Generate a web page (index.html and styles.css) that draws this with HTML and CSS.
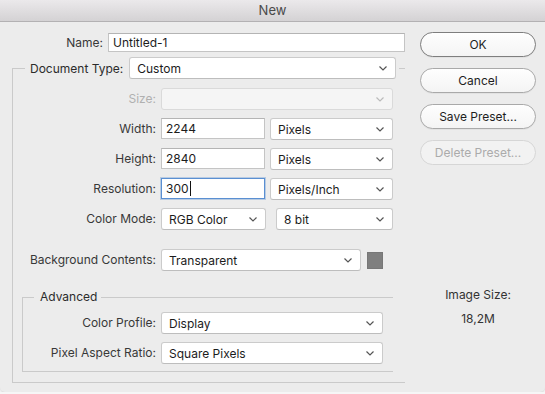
FILE: index.html
```html
<!DOCTYPE html>
<html>
<head>
<meta charset="utf-8">
<link rel="stylesheet" href="styles.css">
</head>
<body>
<div class="window">
  <div class="titlebar">New</div>
  <div class="content">
    <div class="main">
      <div class="name-row">
        <span class="label">Name:</span>
        <div class="input name-input">Untitled-1</div>
      </div>
      <fieldset class="group outer">
        <legend class="outer-legend">
          <span class="legend-label">Document Type:</span>
          <div class="select doc-type"><span>Custom</span><svg class="chev" viewBox="0 0 8 5"><path d="M0.5 0.5 L4 4 L7.5 0.5"/></svg></div>
        </legend>
        <div class="rows">
          <span class="label disabled">Size:</span>
          <div class="select disabled"><span></span><svg class="chev" viewBox="0 0 8 5"><path d="M0.5 0.5 L4 4 L7.5 0.5"/></svg></div>

          <span class="label">Width:</span>
          <div class="pair">
            <div class="input num">2244</div>
            <div class="select unit"><span>Pixels</span><svg class="chev" viewBox="0 0 8 5"><path d="M0.5 0.5 L4 4 L7.5 0.5"/></svg></div>
          </div>

          <span class="label">Height:</span>
          <div class="pair">
            <div class="input num">2840</div>
            <div class="select unit"><span>Pixels</span><svg class="chev" viewBox="0 0 8 5"><path d="M0.5 0.5 L4 4 L7.5 0.5"/></svg></div>
          </div>

          <span class="label">Resolution:</span>
          <div class="pair">
            <div class="input num focused">300<span class="caret"></span></div>
            <div class="select unit"><span>Pixels/Inch</span><svg class="chev" viewBox="0 0 8 5"><path d="M0.5 0.5 L4 4 L7.5 0.5"/></svg></div>
          </div>

          <span class="label">Color Mode:</span>
          <div class="pair wide-gap">
            <div class="select mode"><span>RGB Color</span><svg class="chev" viewBox="0 0 8 5"><path d="M0.5 0.5 L4 4 L7.5 0.5"/></svg></div>
            <div class="select bits"><span>8 bit</span><svg class="chev" viewBox="0 0 8 5"><path d="M0.5 0.5 L4 4 L7.5 0.5"/></svg></div>
          </div>

          <span class="label bg-label">Background Contents:</span>
          <div class="pair bg-pair">
            <div class="select bg-select"><span>Transparent</span><svg class="chev" viewBox="0 0 8 5"><path d="M0.5 0.5 L4 4 L7.5 0.5"/></svg></div>
            <div class="swatch"></div>
          </div>
        </div>

        <fieldset class="group inner">
          <legend class="inner-legend">Advanced</legend>
          <div class="rows inner-rows">
            <span class="label">Color Profile:</span>
            <div class="select"><span>Display</span><svg class="chev" viewBox="0 0 8 5"><path d="M0.5 0.5 L4 4 L7.5 0.5"/></svg></div>

            <span class="label">Pixel Aspect Ratio:</span>
            <div class="select"><span>Square Pixels</span><svg class="chev" viewBox="0 0 8 5"><path d="M0.5 0.5 L4 4 L7.5 0.5"/></svg></div>
          </div>
        </fieldset>
      </fieldset>
    </div>

    <div class="side">
      <div class="button default">OK</div>
      <div class="button">Cancel</div>
      <div class="button">Save Preset...</div>
      <div class="button disabled-btn">Delete Preset...</div>
      <div class="image-size">
        <div class="is-label">Image Size:</div>
        <div class="is-value">18,2M</div>
      </div>
    </div>
  </div>
</div>
</body>
</html>
```

FILE: styles.css
```css
* { box-sizing: border-box; }

html, body {
  margin: 0;
  padding: 0;
  background: #f6f6f6;
}

body {
  font-family: Inter, "Helvetica Neue", "Liberation Sans", sans-serif;
  font-size: 12px;
  color: #2b2b2b;
}

.window {
  width: 545px;
  height: 392px;
  background: #ececec;
  border-radius: 0 0 5px 5px;
  box-shadow: 0 1px 2px rgba(0,0,0,0.12);
  overflow: hidden;
}

.titlebar {
  height: 22px;
  line-height: 21px;
  text-align: center;
  font-size: 13px;
  color: #4a4a4a;
  background: linear-gradient(#ebe9eb, #d4d2d4);
  border-bottom: 1px solid #b3b1b3;
}

.content {
  display: flex;
}

.main {
  width: 410px;
  padding-top: 11px;
}

.label {
  text-align: right;
  line-height: 22px;
  color: #383838;
  white-space: nowrap;
}

.label.disabled { color: #b0b0b0; }

.name-row {
  display: grid;
  grid-template-columns: 103px 297px;
  column-gap: 5px;
  align-items: center;
}

.name-row .label { line-height: 19px; }

.input {
  background: #fff;
  border: 1px solid #c4c4c4;
  border-top-color: #b4b4b4;
  height: 21px;
  line-height: 19px;
  padding-left: 4px;
  color: #1c1c1c;
  white-space: nowrap;
}

.name-input { height: 19px; line-height: 17px; }

.input.focused {
  border: 1px solid #5a8fd2;
  box-shadow: 0 0 0 1px rgba(90,143,210,0.35);
}

.caret {
  display: inline-block;
  width: 1px;
  height: 15px;
  background: #111;
  vertical-align: -3px;
  margin-left: 1px;
}

.select {
  position: relative;
  display: flex;
  align-items: center;
  justify-content: space-between;
  height: 22px;
  background: #fff;
  border: 1px solid #cbcbcb;
  border-bottom-color: #bdbdbd;
  border-radius: 3px;
  padding: 0 8px 0 7px;
  color: #1c1c1c;
  white-space: nowrap;
}

.select.disabled {
  background: #f5f5f5;
  border-color: #dadada;
}

.chev {
  width: 8px;
  height: 5px;
  flex-shrink: 0;
  fill: none;
  stroke: #555;
  stroke-width: 1.2;
}

.select.disabled .chev { stroke: #bbb; }

.group {
  margin: 0;
  padding: 0;
  border: 1px solid #cacaca;
  border-right: none;
  min-width: 0;
}

.outer {
  margin: 5px 0 0 12px;
  width: 393px;
  padding-bottom: 10px;
}

.outer-legend {
  display: flex;
  align-items: center;
  white-space: nowrap;
  margin-left: 12px;
  padding: 0 3px 0 5px;
}

.legend-label {
  flex-shrink: 0;
  white-space: nowrap;
  color: #2b2b2b;
  margin-right: 6px;
}

.doc-type { width: 267px; flex-shrink: 0; }

.rows {
  display: grid;
  grid-template-columns: 143px 232px;
  column-gap: 5px;
  row-gap: 8px;
  padding-top: 9px;
}

.pair {
  display: flex;
  gap: 5px;
}

.pair.wide-gap { gap: 10px; }

.num { width: 104px; }
.unit { flex: 1; }
.mode { width: 105px; }
.bits { flex: 1; }

.bg-label { margin-top: 11px; }
.bg-pair {
  margin-top: 11px;
  gap: 6px;
  align-items: center;
}
.bg-select { width: 200px; }

.swatch {
  width: 16px;
  height: 17px;
  background: #7f7f7f;
  border: 1px solid #777;
}

.inner {
  margin: 18px 0 0 9px;
  width: 371px;
  padding-bottom: 7px;
}

.inner-legend {
  margin-left: 11px;
  padding: 0 4px 0 6px;
  line-height: 16px;
  color: #2b2b2b;
}

.inner-rows {
  grid-template-columns: 133px 222px;
  padding-top: 7px;
}

.side {
  padding-top: 10px;
  padding-left: 10px;
  display: flex;
  flex-direction: column;
  gap: 11px;
}

.button {
  width: 116px;
  height: 25px;
  line-height: 23px;
  text-align: center;
  border: 1px solid #a9a9a9;
  border-radius: 13px;
  background: linear-gradient(#fefefe, #f4f4f4);
  color: #1e1e1e;
  box-shadow: 0 1px 0 rgba(0,0,0,0.04);
}

.button.default { border-color: #7e7e7e; }

.button.disabled-btn {
  border-color: #d6d6d6;
  color: #ababab;
  background: #f2f2f2;
  box-shadow: none;
}

.image-size {
  margin-top: 111px;
  text-align: center;
  width: 116px;
  color: #333;
}

.is-label { line-height: 16px; }
.is-value { line-height: 16px; margin-top: 8px; }
```
